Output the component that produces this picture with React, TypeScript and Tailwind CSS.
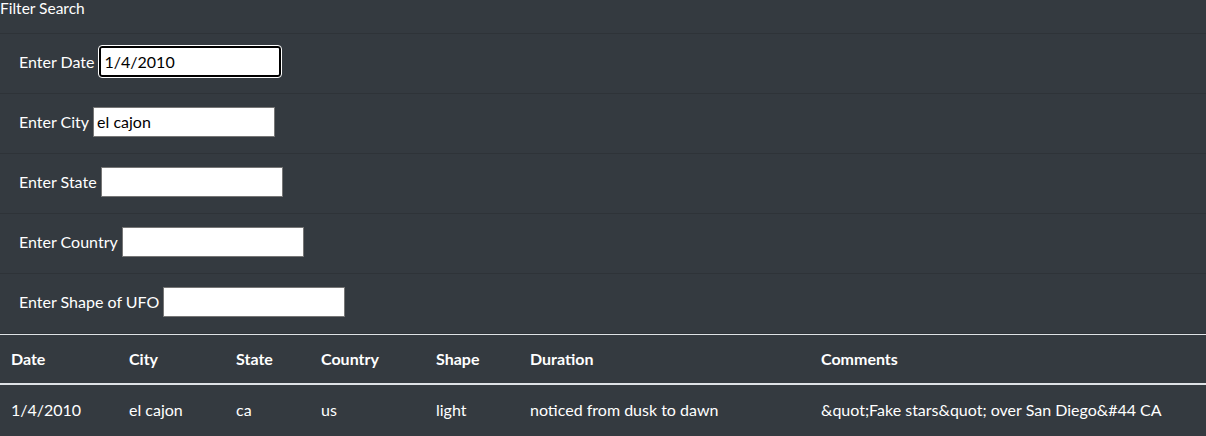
import React from "react";

const font = { fontFamily: "Lato, 'Noto Sans', sans-serif" };

function Field({ label, value, focused }: { label: string; value?: string; focused?: boolean }) {
  return (
    <div className="flex h-[60px] items-center border-b border-[#2e3338] pb-[4px] pl-[19px] text-[16px] text-white">
      <span className="mr-[4px]">{label}</span>
      <input
        readOnly
        defaultValue={value}
        className={
          focused
            ? "h-[31px] w-[182px] rounded-[3px] border-2 border-black bg-white px-[4px] text-[16px] text-black outline outline-1 outline-white"
            : "h-[30px] w-[182px] border border-[#767676] bg-white px-[3px] text-[16px] text-black outline-none"
        }
        style={font}
      />
    </div>
  );
}

export default function App() {
  const cols = [
    ["Date", "118px"],
    ["City", "107px"],
    ["State", "85px"],
    ["Country", "115px"],
    ["Shape", "94px"],
    ["Duration", "291px"],
    ["Comments", "auto"],
  ];
  const row = ["1/4/2010", "el cajon", "ca", "us", "light", "noticed from dusk to dawn", "&quot;Fake stars&quot; over San Diego&#44 CA"];
  return (
    <div className="h-[436px] w-[1206px] overflow-hidden bg-[#343a40] text-white" style={font}>
      <div className="h-[34px] border-b border-[#2e3338] text-[15.5px] leading-[16px]">Filter Search</div>
      <Field label="Enter Date" value="1/4/2010" focused />
      <Field label="Enter City" value="el cajon" />
      <Field label="Enter State" />
      <Field label="Enter Country" />
      <Field label="Enter Shape of UFO" />
      <table className="w-full border-collapse text-[16px] leading-[24px]">
        <thead>
          <tr>
            {cols.map(([c, w]) => (
              <th
                key={c}
                className="border-t border-b-2 border-t-[#dee2e6] border-b-[#dee2e6] px-[11px] py-[12px] text-left font-bold"
                style={{ width: w }}
              >
                {c}
              </th>
            ))}
          </tr>
        </thead>
        <tbody>
          <tr>
            {row.map((c, i) => (
              <td key={i} className="px-[11px] pt-[13px] pb-[11px] text-left">
                {c}
              </td>
            ))}
          </tr>
        </tbody>
      </table>
    </div>
  );
}
